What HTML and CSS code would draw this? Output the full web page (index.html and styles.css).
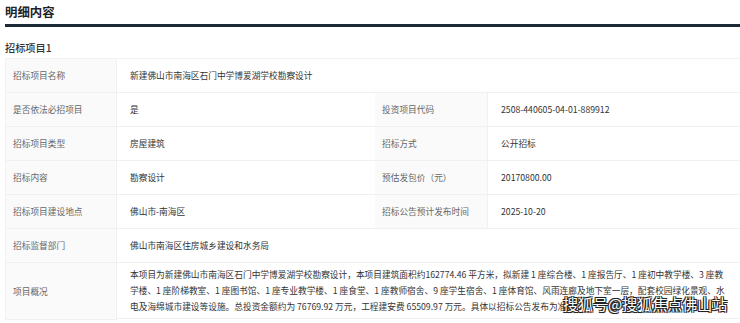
FILE: index.html
```html
<!DOCTYPE html>
<html lang="zh-CN">
<head>
<meta charset="utf-8">
<link rel="stylesheet" href="styles.css">
</head>
<body>
<div class="page">
  <h1 class="title">明细内容</h1>
  <div class="rule"></div>
  <h2 class="sub">招标项目1</h2>
  <div class="table">
    <div class="lab">招标项目名称</div>
    <div class="val span3">新建佛山市南海区石门中学博爱湖学校勘察设计</div>

    <div class="lab">是否依法必招项目</div>
    <div class="val">是</div>
    <div class="lab">投资项目代码</div>
    <div class="val">2508-440605-04-01-889912</div>

    <div class="lab">招标项目类型</div>
    <div class="val">房屋建筑</div>
    <div class="lab">招标方式</div>
    <div class="val">公开招标</div>

    <div class="lab">招标内容</div>
    <div class="val">勘察设计</div>
    <div class="lab">预估发包价（元）</div>
    <div class="val">20170800.00</div>

    <div class="lab">招标项目建设地点</div>
    <div class="val">佛山市-南海区</div>
    <div class="lab">招标公告预计发布时间</div>
    <div class="val">2025-10-20</div>

    <div class="lab">招标监督部门</div>
    <div class="val span3">佛山市南海区住房城乡建设和水务局</div>

    <div class="lab tall">项目概况</div>
    <div class="val span3 desc">本项目为新建佛山市南海区石门中学博爱湖学校勘察设计，本项目建筑面积约162774.46 平方米，拟新建 1 座综合楼、1 座报告厅、1 座初中教学楼、3 座教学楼、1 座阶梯教室、1 座图书馆、1 座专业教学楼、1 座食堂、1 座教师宿舍、9 座学生宿舍、1 座体育馆、风雨连廊及地下室一层，配套校园绿化景观、水电及海绵城市建设等设施。总投资金额约为 76769.92 万元，工程建安费 65509.97 万元。具体以招标公告发布为准。</div>
  </div>
  <div class="watermark">搜狐号@搜狐焦点佛山站</div>
</div>
</body>
</html>
```

FILE: styles.css
```css
html, body {
  margin: 0;
  padding: 0;
  background: #ffffff;
}
body {
  font-family: "Noto Sans CJK SC", "Noto Sans", sans-serif;
  color: #333333;
  overflow: hidden;
}
.page {
  position: relative;
  padding-left: 5px;
  width: 735px;
}
.title {
  margin: 0;
  padding-top: 3px;
  font-size: 12.4px;
  line-height: 18px;
  font-weight: 700;
  color: #222222;
}
.rule {
  margin-top: 3px;
  height: 3px;
  background: #1e2936;
}
.sub {
  margin: 0;
  padding-top: 14px;
  font-size: 10.2px;
  line-height: 14px;
  font-weight: 500;
  color: #333333;
}
.table {
  margin-top: 3px;
  display: grid;
  grid-template-columns: 111px 258px 113px 1fr;
  border-top: 1px solid #f2f2f2;
  border-left: 1px solid #f2f2f2;
}
.lab, .val {
  display: flex;
  align-items: center;
  height: 33px;
  border-bottom: 1px solid #f0f0f0;
  font-size: 8.7px;
  white-space: nowrap;
}
.lab {
  background: #fafafa;
  color: #666666;
  padding-left: 7px;
  border-right: 1px solid #f0f0f0;
}
.val {
  color: #333333;
  padding-left: 13px;
}
.span3 {
  grid-column: span 3;
}
.tall {
  height: 56px;
}
.desc {
  display: block;
  height: 56px;
  white-space: normal;
  line-height: 16px;
  padding-right: 13px;
  box-sizing: border-box;
  padding-top: 4px;
  padding-bottom: 4px;
}
.watermark {
  position: absolute;
  left: 563px;
  top: 293px;
  font-size: 15px;
  line-height: 22px;
  color: #ffffff;
  font-weight: 400;
  text-shadow: -1px -1px 0 #222, 1px -1px 0 #222, -1px 1px 0 #222, 1px 1px 0 #222, 0 0 2px #000;
  white-space: nowrap;
}
```
